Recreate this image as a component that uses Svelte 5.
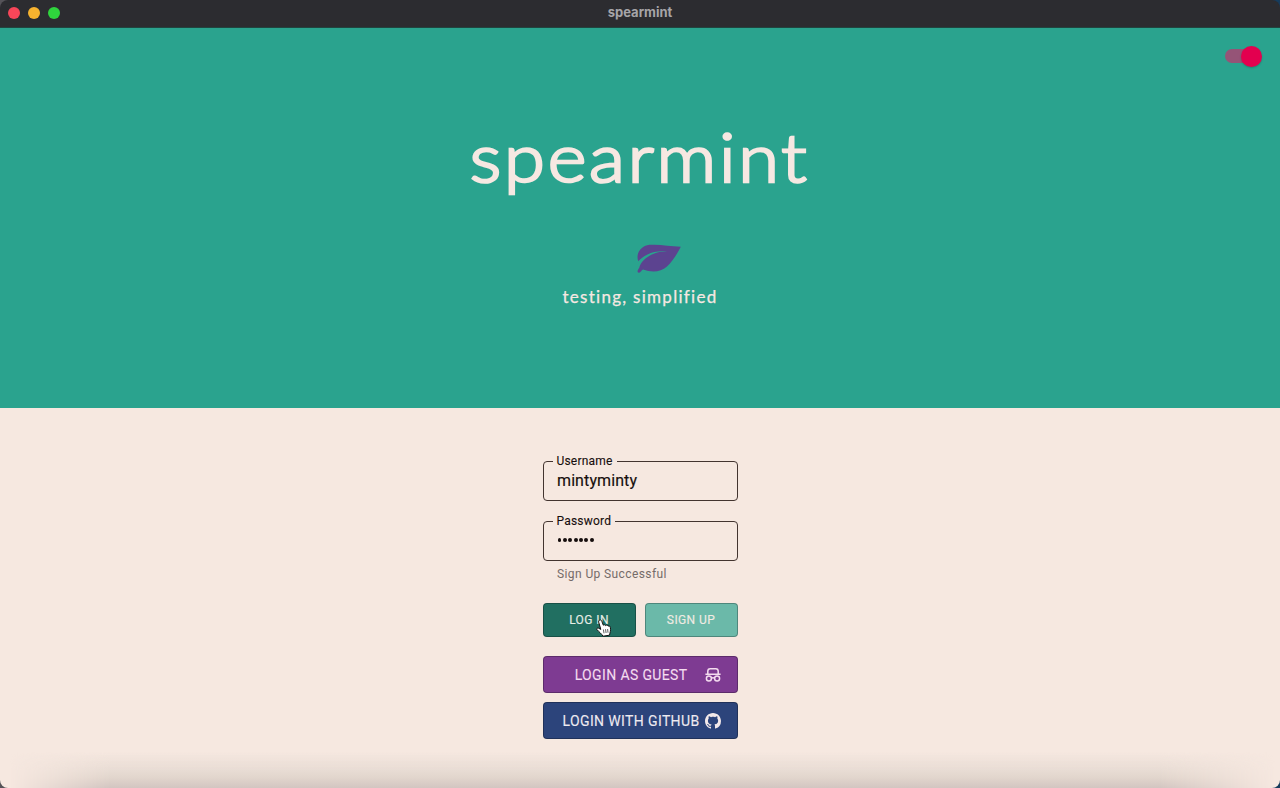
<script>
  let username = $state('mintyminty');
  const dots = Array.from({ length: 7 });
</script>

<div class="desktop">
  <div class="window">
    <header class="titlebar">
      <span class="light close"></span>
      <span class="light minimise"></span>
      <span class="light zoom"></span>
      <span class="caption">spearmint</span>
    </header>

    <section class="hero">
      <div class="switch"><span class="track"></span><span class="thumb"></span></div>
      <h1>spearmint</h1>
      <svg class="leaf" viewBox="0 0 44 29" width="44" height="29">
        <path fill="#5c4390" d="M.8 28.2C.2 27 1 25.500 2.200 24C3.300 18.600 8.500 13.200 15.500 10.200C20 8.200 25 7.500 30.500 7.600C23 6.700 16 7.700 10.500 10.400C6.500 12.400 3.300 14.800 1.300 17.300C-.6 12.200 1 6.700 5.500 3.500C9 1 12 .7 17 .8C26 1 34 2.600 43.800 2.700C40.500 9.200 36 17 30 22.500C23.500 28.300 14.500 28.500 6 25.500C4.500 26.200 3.300 28.800 1.700 28.800Z"/>
      </svg>
      <p class="tagline">testing, simplified</p>
    </section>

    <main class="form">
      <fieldset class="user">
        <legend>Username</legend>
        <span class="value">{username}</span>
      </fieldset>
      <fieldset class="pass">
        <legend>Password</legend>
        <span class="dots">{#each dots as _}<i></i>{/each}</span>
      </fieldset>
      <p class="helper">Sign Up Successful</p>
      <div class="pair">
        <button class="login">LOG IN
          <svg class="pointer" viewBox="0 0 16 18" width="16" height="18">
            <path fill="#fff" stroke="#111" stroke-width="1" stroke-linejoin="round" d="M3.200 1.300C4.200.4 5.400 1 5.800 2.300L7.300 6.200C8.200 5.500 9 5.700 9.600 6.600C10.600 5.700 11.600 6.100 12 7.100C13.400 6.500 14.200 7.300 14.400 8.700C14.900 11.500 14 13.200 13.500 16.200L7 17.200C5.600 14.700 2.700 12.600 1 10.700C.3 9.600 1.300 8.700 2.600 9.200L4.800 10.400L2.700 3.200C2.500 2.400 2.600 1.800 3.200 1.300Z"/>
            <path fill="none" stroke="#333" stroke-width=".8" d="M7.400 10.500L8 14.300M9.500 10.200L10.100 14M11.600 10L12 13.700"/>
          </svg>
        </button>
        <button class="signup">SIGN UP</button>
      </div>
      <button class="wide guest">
        <span>LOGIN AS GUEST</span>
        <svg viewBox="0 0 16 16" width="16" height="16" fill="none" stroke="#f4dcef" stroke-width="1.500">
          <path d="M.4 7.200H15.600M2.800 7V4.300C2.800 2.400 3.500 1.700 5.200 1.700H10.800C12.500 1.700 13.200 2.400 13.200 4.300V7M6.400 11.200Q8 10.300 9.600 11.200"/>
          <circle cx="3.900" cy="11.600" r="2.500"/>
          <circle cx="12.100" cy="11.600" r="2.500"/>
        </svg>
      </button>
      <button class="wide github">
        <span>LOGIN WITH GITHUB</span>
        <svg viewBox="0 0 16 16" width="16" height="16" fill="#f3e9ea">
          <path d="M8 0C3.580 0 0 3.580 0 8c0 3.540 2.290 6.530 5.470 7.590.4.070.55-.17.55-.38 0-.19-.01-.82-.01-1.490-2.010.37-2.530-.49-2.690-.94-.09-.23-.48-.94-.82-1.130-.28-.15-.68-.52-.01-.53.63-.01 1.080.58 1.230.82.72 1.210 1.870.87 2.330.66.070-.52.28-.87.51-1.070-1.780-.2-3.640-.89-3.640-3.950 0-.87.31-1.590.82-2.150-.08-.2-.36-1.020.08-2.120 0 0 .67-.21 2.200.82.64-.18 1.320-.27 2-.27s1.360.09 2 .27c1.530-1.040 2.200-.82 2.200-.82.44 1.100.16 1.920.08 2.120.51.56.82 1.270.82 2.150 0 3.070-1.870 3.750-3.650 3.950.29.25.54.73.54 1.480 0 1.070-.01 1.930-.01 2.200 0 .21.15.46.55.38A8.010 8.010 0 0 0 16 8c0-4.420-3.580-8-8-8Z"/>
        </svg>
      </button>
      <div class="shade"></div>
    </main>
  </div>
</div>

<style>
  .desktop { width: 1280px; height: 788px; background: linear-gradient(90deg, #555358 50%, #173c5c 50%); overflow: hidden; }
  .window { position: relative; height: 788px; display: flex; flex-direction: column; border-radius: 8px; overflow: hidden; font-family: Roboto, sans-serif; }
  .titlebar { position: relative; box-sizing: border-box; height: 28px; flex: none; display: flex; align-items: center; gap: 8px; padding: 0 8px 2px; background: #2c2c30; border-bottom: 1px solid #20453f; }
  .light { width: 12px; height: 12px; border-radius: 50%; }
  .close { background: #f84659; }
  .minimise { background: #f7b32f; }
  .zoom { background: #2fd43d; }
  .caption { position: absolute; left: 0; right: 0; top: 4px; text-align: center; font: 700 13px/16px Inter, sans-serif; color: #a6a5a8; }
  .hero { position: relative; flex: none; height: 380px; background: #2aa38e; display: flex; flex-direction: column; align-items: center; color: #f6e8e2; }
  .switch { position: absolute; right: 18.500px; top: 17.500px; width: 38px; height: 21px; display: flex; align-items: center; }
  .track { width: 34px; height: 14px; border-radius: 7px; background: #955477; margin-left: 1px; }
  .thumb { position: absolute; right: 0; width: 21px; height: 21px; border-radius: 50%; background: #e3004f; box-shadow: 0 1px 2px #0003; }
  h1 { margin: 83px 0 0; height: 90px; font: 300 67px/90px Lato, sans-serif; letter-spacing: 2.500px; transform: scaleX(1.105); white-space: nowrap; -webkit-text-stroke: 2.600px #f6e8e2; }
  .leaf { margin: 43px 0 0 37px; }
  .tagline { margin: 14px 0 0; font: 400 17px/20px Lato, sans-serif; letter-spacing: 1.280px; white-space: nowrap; -webkit-text-stroke: .25px #f6e8e2; }
  .form { position: relative; flex: 1; background: #f6e8e0; display: flex; flex-direction: column; align-items: center; }
  fieldset { box-sizing: border-box; width: 195px; height: 47px; margin: 0; padding: 0 13px; border: 1.500px solid #43342f; border-radius: 4px; min-width: 0; color: #160e0d; }
  .user { margin-top: 46px; }
  .pass { margin-top: 13px; }
  legend { margin-left: -4px; padding: 0 4px; font-size: 12px; line-height: 14px; letter-spacing: .2px; -webkit-text-stroke: .1px #160e0d; }
  .value { display: block; margin: 4px 0 0 .5px; font-size: 16px; line-height: 18px; letter-spacing: .1px; -webkit-text-stroke: .15px #160e0d; }
  .dots { display: flex; gap: 1.500px; margin: 10px 0 0 1px; }
  .dots i { width: 3.900px; height: 3.900px; border-radius: 50%; background: #160e0d; }
  .helper { width: 167px; margin: 5px 0 0 1px; font-size: 12px; line-height: 16px; letter-spacing: .4px; color: #756b69; }
  button { box-sizing: border-box; font-family: Roboto, sans-serif; border: 1px solid #0004; border-radius: 4px; padding: 0; }
  .pair { width: 195px; margin-top: 21px; display: flex; gap: 9px; }
  .pair button { position: relative; height: 34px; font-size: 12px; letter-spacing: .4px; padding-bottom: 1px; -webkit-text-stroke: .15px currentColor; }
  .login { width: 93px; background: #216f61; color: #e7eee6; }
  .signup { width: 93px; background: #6bb9a9; color: #f0ebe3; }
  .pointer { position: absolute; left: 52.500px; top: 15px; }
  .wide { width: 195px; height: 37px; display: flex; align-items: center; justify-content: flex-end; padding-right: 16px; font-size: 14px; letter-spacing: .37px; -webkit-text-stroke: .1px currentColor; }
  .guest { margin-top: 19px; background: #7e3b92; color: #f4dcef; gap: 17px; }
  .github { margin-top: 9px; background: #2c447b; color: #eeeaf0; gap: 5px; }
  .shade { position: absolute; left: 0; right: 0; bottom: 0; height: 36px; background: linear-gradient(#eadfd600, #e8dcd4 50%, #e2d6cd 70%, #d2c5c1); -webkit-mask-image: linear-gradient(90deg, transparent 10px, #000 110px, #000 1160px, transparent 1275px); mask-image: linear-gradient(90deg, transparent 10px, #000 110px, #000 1160px, transparent 1275px); }
</style>
